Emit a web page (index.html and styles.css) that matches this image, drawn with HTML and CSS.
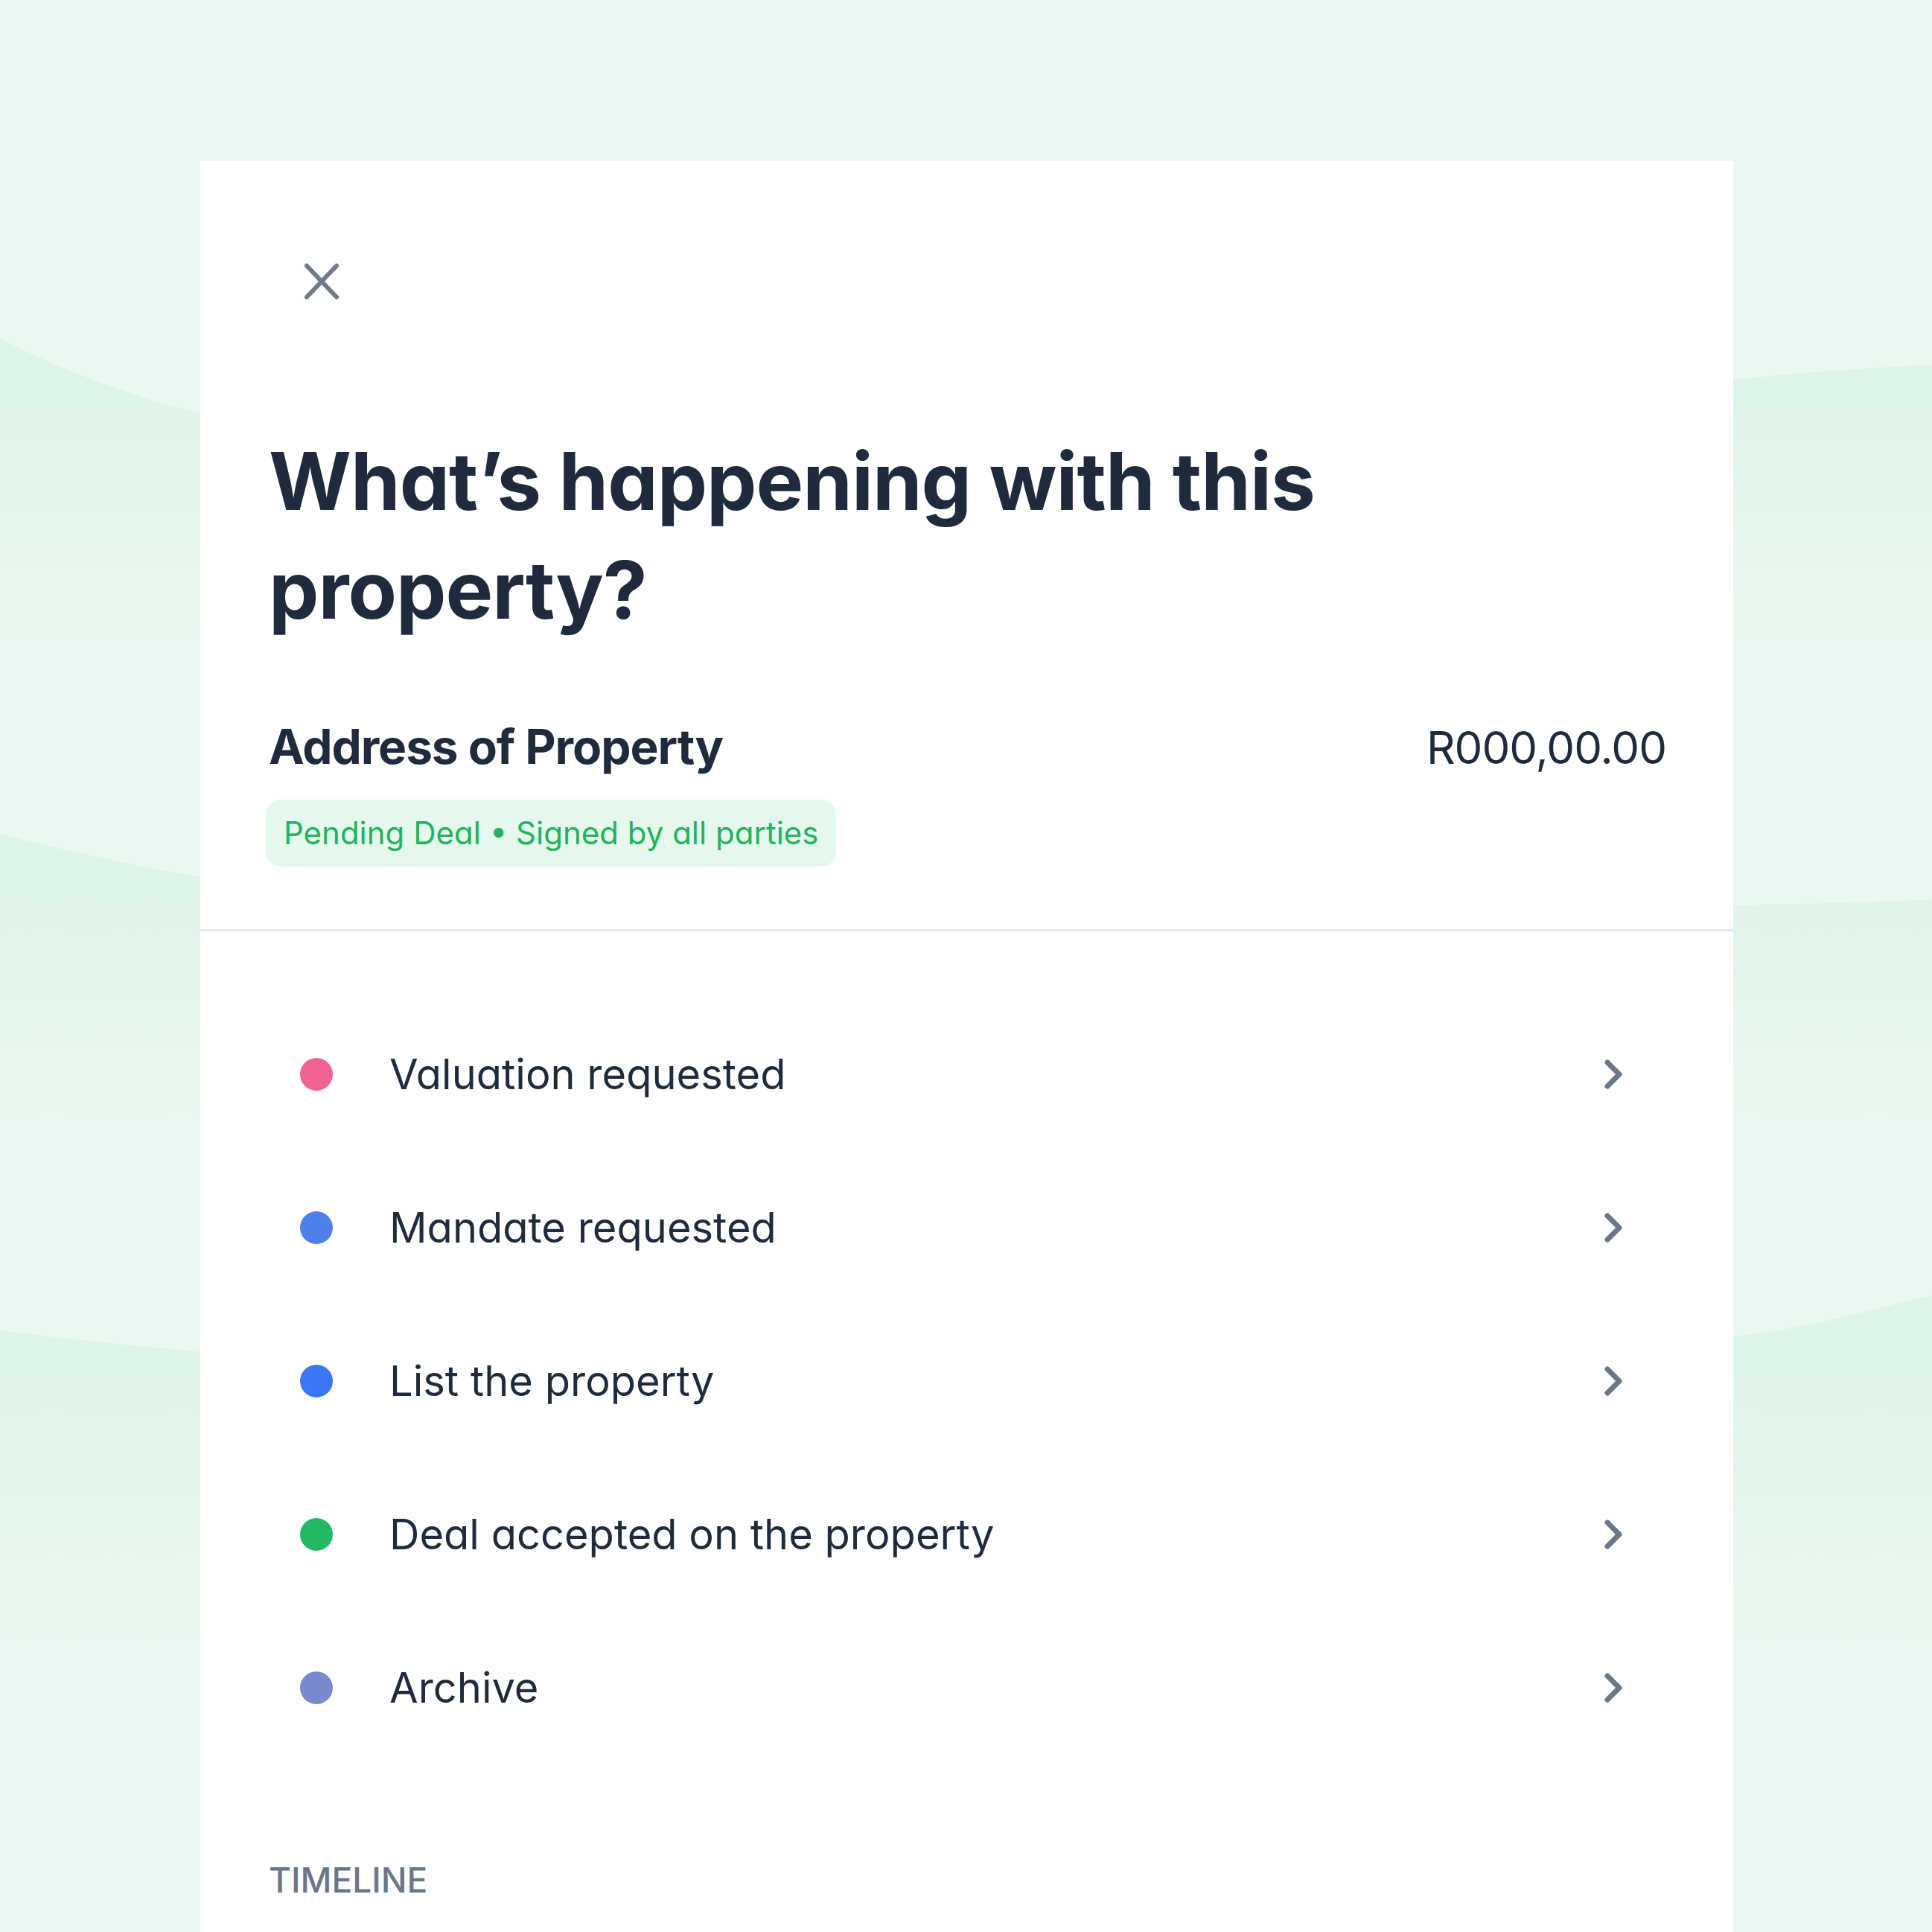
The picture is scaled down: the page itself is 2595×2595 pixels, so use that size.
FILE: index.html
```html
<!DOCTYPE html>
<html lang="en">
<head>
<meta charset="utf-8">
<title>What’s happening with this property?</title>
<link rel="stylesheet" href="styles.css">
</head>
<body>
<div class="backdrop" aria-hidden="true">
  <svg width="2595" height="2595" viewBox="0 0 2595 2595">
    <defs>
      <linearGradient id="g1" x1="0" y1="450" x2="0" y2="860" gradientUnits="userSpaceOnUse">
        <stop offset="0" stop-color="#ddf3e6"/>
        <stop offset="0.35" stop-color="#e0f4e9"/>
        <stop offset="1" stop-color="#ebf8f1"/>
      </linearGradient>
      <linearGradient id="g2" x1="0" y1="1120" x2="0" y2="1500" gradientUnits="userSpaceOnUse">
        <stop offset="0" stop-color="#ddf3e6"/>
        <stop offset="0.35" stop-color="#e0f4e9"/>
        <stop offset="1" stop-color="#ebf8f1"/>
      </linearGradient>
      <linearGradient id="g3" x1="0" y1="1740" x2="0" y2="2200" gradientUnits="userSpaceOnUse">
        <stop offset="0" stop-color="#ddf3e6"/>
        <stop offset="0.35" stop-color="#e0f4e9"/>
        <stop offset="1" stop-color="#ebf8f1"/>
      </linearGradient>
    </defs>
    <rect width="2595" height="2595" fill="#ebf8f1"/>
    <path d="M0 455 C 120 515 220 545 300 562 C 700 620 1400 560 2328 510 C 2420 500 2510 494 2595 490 L2595 1120 L0 1120 Z" fill="url(#g1)"/>
    <path d="M0 1120 C 100 1145 200 1168 300 1182 C 900 1230 1700 1222 2328 1216 C 2420 1214 2510 1212 2595 1208 L2595 1760 L0 1760 Z" fill="url(#g2)"/>
    <path d="M0 1787 C 100 1800 200 1810 300 1818 C 1000 1840 1800 1830 2328 1795 C 2420 1786 2510 1760 2595 1740 L2595 2595 L0 2595 Z" fill="url(#g3)"/>
  </svg>
</div>

<main class="sheet">
  <header class="sheet-head">
    <button class="close" type="button" aria-label="Close">
      <svg viewBox="0 0 50 52" width="50" height="52">
        <path d="M5 5 L45 47 M45 5 L5 47" fill="none" stroke="#6e7a8c" stroke-width="6" stroke-linecap="round"/>
      </svg>
    </button>
    <h1 class="title">What’s happening with this property?</h1>
    <div class="prop-row">
      <h2 class="prop-name">Address of Property</h2>
      <span class="price">R000,00.00</span>
    </div>
    <span class="badge">Pending Deal • Signed by all parties</span>
  </header>

  <ul class="actions">
    <li class="action">
      <span class="dot dot-pink"></span>
      <span class="label">Valuation requested</span>
      <svg class="chev" viewBox="0 0 28 44"><path d="M6 6 L22 22 L6 38" fill="none" stroke="#6b7789" stroke-width="7" stroke-linecap="round" stroke-linejoin="round"/></svg>
    </li>
    <li class="action">
      <span class="dot dot-indigo"></span>
      <span class="label">Mandate requested</span>
      <svg class="chev" viewBox="0 0 28 44"><path d="M6 6 L22 22 L6 38" fill="none" stroke="#6b7789" stroke-width="7" stroke-linecap="round" stroke-linejoin="round"/></svg>
    </li>
    <li class="action">
      <span class="dot dot-blue"></span>
      <span class="label">List the property</span>
      <svg class="chev" viewBox="0 0 28 44"><path d="M6 6 L22 22 L6 38" fill="none" stroke="#6b7789" stroke-width="7" stroke-linecap="round" stroke-linejoin="round"/></svg>
    </li>
    <li class="action">
      <span class="dot dot-green"></span>
      <span class="label">Deal accepted on the property</span>
      <svg class="chev" viewBox="0 0 28 44"><path d="M6 6 L22 22 L6 38" fill="none" stroke="#6b7789" stroke-width="7" stroke-linecap="round" stroke-linejoin="round"/></svg>
    </li>
    <li class="action">
      <span class="dot dot-lavender"></span>
      <span class="label">Archive</span>
      <svg class="chev" viewBox="0 0 28 44"><path d="M6 6 L22 22 L6 38" fill="none" stroke="#6b7789" stroke-width="7" stroke-linecap="round" stroke-linejoin="round"/></svg>
    </li>
  </ul>

  <h3 class="section-label">TIMELINE</h3>
</main>
</body>
</html>
```

FILE: styles.css
```css
* { box-sizing: border-box; }

body {
  margin: 0;
  width: 2595px;
  height: 2595px;
  overflow: hidden;
  position: relative;
  background: #ebf8f1;
  font-family: Inter, "Noto Sans", "Liberation Sans", sans-serif;
  font-feature-settings: "cv11" 1;
  color: #1f2a3c;
}

.backdrop {
  position: absolute;
  inset: 0;
  z-index: 0;
}
.backdrop svg { display: block; }

.sheet {
  position: relative;
  z-index: 1;
  margin: 216px 0 0 269px;
  width: 2059px;
  height: 2379px;
  background: #ffffff;
}

.sheet-head {
  padding: 136px 90px 84px 92px;
  border-bottom: 3px solid #e3e8ee;
}

.close {
  display: block;
  width: 50px;
  height: 52px;
  margin-left: 46px;
  padding: 0;
  border: 0;
  background: none;
}
.close svg { display: block; }

.title {
  margin: 169px 0 0;
  max-width: 1600px;
  font-size: 107px;
  line-height: 146px;
  font-weight: 700;
  letter-spacing: -1px;
  color: #1f2a3c;
}

.prop-row {
  display: flex;
  justify-content: space-between;
  align-items: baseline;
  margin-top: 96px;
}

.prop-name {
  margin: 0;
  font-size: 64px;
  line-height: 83px;
  font-weight: 700;
  letter-spacing: -1.1px;
  color: #1f2a3c;
}

.price {
  font-size: 60px;
  line-height: 83px;
  font-weight: 400;
  letter-spacing: -1px;
  color: #1f2a3c;
}

.badge {
  display: inline-block;
  margin-top: 28px;
  margin-left: -4px;
  padding: 0 24px;
  height: 90px;
  line-height: 90px;
  border-radius: 20px;
  background: #e6f7ee;
  color: #22b35e;
  font-size: 42px;
}

.actions {
  list-style: none;
  margin: 0;
  padding: 89px 147px 0 134px;
}

.action {
  display: flex;
  align-items: center;
  height: 206px;
}

.dot {
  flex: none;
  width: 44px;
  height: 44px;
  border-radius: 50%;
  margin-right: 76px;
}
.dot-pink { background: #f06292; }
.dot-indigo { background: #4f7fe8; }
.dot-blue { background: #3b76f6; }
.dot-green { background: #22b865; }
.dot-lavender { background: #7a88d0; }

.label {
  flex: 1;
  font-size: 56px;
  color: #1f2a3c;
}

.chev {
  flex: none;
  width: 28px;
  height: 44px;
}

.section-label {
  margin: 128px 0 0 92px;
  font-size: 46px;
  line-height: 55px;
  font-weight: 500;
  letter-spacing: 0;
  color: #6b7789;
}
```
